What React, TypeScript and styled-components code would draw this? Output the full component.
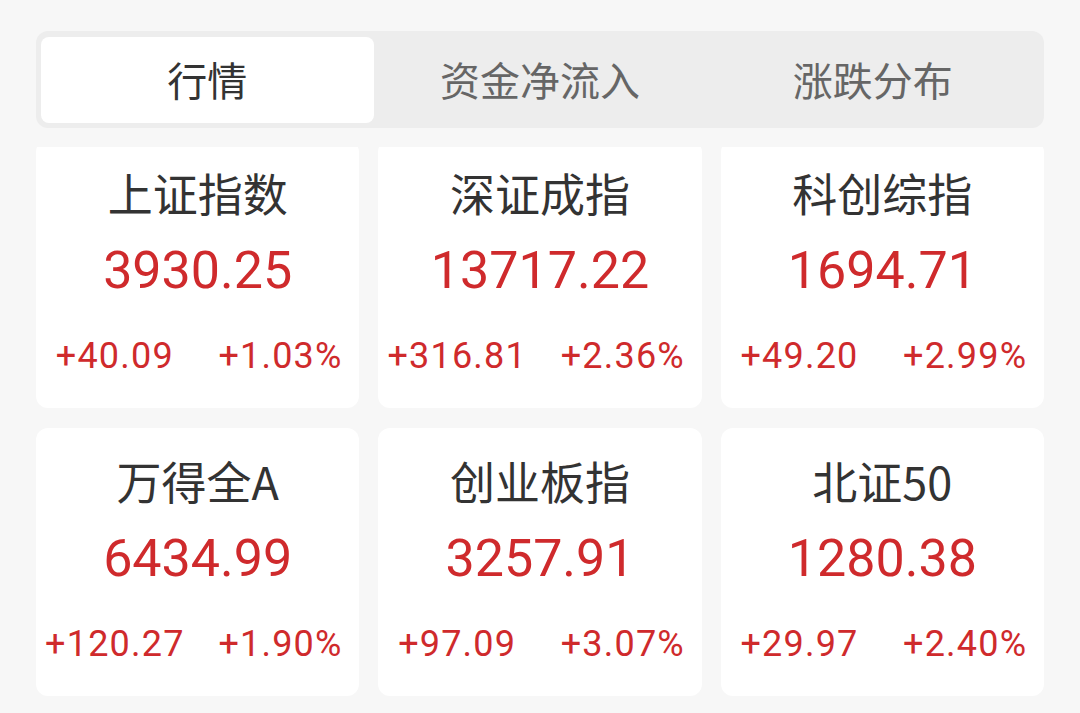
import { useState } from "react";
import styled, { createGlobalStyle } from "styled-components";

const GlobalStyle = createGlobalStyle`
  html, body {
    margin: 0;
    padding: 0;
    background: #f7f7f7;
  }
  body {
    font-family: Roboto, "Noto Sans CJK SC", "Noto Sans", sans-serif;
  }
`;

const Page = styled.div`
  box-sizing: border-box;
  display: flex;
  flex-direction: column;
  gap: 19px;
  height: 713px;
  overflow: hidden;
  padding: 31px 36px 0;
`;

const TabBar = styled.div`
  background: #ededed;
  border-radius: 12px;
  box-sizing: border-box;
  display: flex;
  flex-shrink: 0;
  height: 97px;
  padding: 6px 5px 5px;
`;

const Tab = styled.button<{ $active: boolean }>`
  align-items: center;
  background: ${({ $active }) => ($active ? "#ffffff" : "transparent")};
  border: none;
  border-radius: 8px;
  color: ${({ $active }) => ($active ? "#333333" : "#666666")};
  cursor: pointer;
  display: flex;
  flex: 1;
  font-family: "Noto Sans CJK SC", sans-serif;
  font-size: 40px;
  justify-content: center;
  padding: 0 0 2px;
`;

/* the card list is scrolled a few pixels, so the first row is cut at the top */
const Viewport = styled.div`
  flex: 1;
  overflow: hidden;
`;

const Grid = styled.div`
  display: grid;
  gap: 20px 19px;
  grid-template-columns: repeat(3, 1fr);
  margin-top: -7px;
`;

const Card = styled.div`
  background: #ffffff;
  border-radius: 12px;
  box-sizing: border-box;
  display: flex;
  flex-direction: column;
  height: 268px;
  padding: 25px 0 30px;
`;

const Name = styled.div`
  color: #333333;
  font-family: "Noto Sans CJK SC", sans-serif;
  font-size: 45px;
  line-height: 56px;
  text-align: center;
`;

const Price = styled.div`
  color: #cf2a2c;
  font-family: Roboto, sans-serif;
  font-size: 52px;
  line-height: 64px;
  margin-top: 18px;
  text-align: center;
`;

const Changes = styled.div`
  display: flex;
  gap: 8px;
  margin-top: 31px;
`;

const Change = styled.span`
  color: #cf2a2c;
  flex: 1;
  font-family: Roboto, sans-serif;
  font-size: 36px;
  letter-spacing: 1.2px;
  line-height: 44px;
  text-align: center;
  white-space: nowrap;
`;

interface Index {
  name: string;
  price: string;
  change: string;
  percent: string;
}

const tabs = ["行情", "资金净流入", "涨跌分布"];

const indices: Index[] = [
  { name: "上证指数", price: "3930.25", change: "+40.09", percent: "+1.03%" },
  { name: "深证成指", price: "13717.22", change: "+316.81", percent: "+2.36%" },
  { name: "科创综指", price: "1694.71", change: "+49.20", percent: "+2.99%" },
  { name: "万得全A", price: "6434.99", change: "+120.27", percent: "+1.90%" },
  { name: "创业板指", price: "3257.91", change: "+97.09", percent: "+3.07%" },
  { name: "北证50", price: "1280.38", change: "+29.97", percent: "+2.40%" },
];

const App = () => {
  const [activeTab, setActiveTab] = useState(0);

  return (
    <>
      <GlobalStyle />
      <Page>
        <TabBar>
          {tabs.map((tab, index) => (
            <Tab
              key={tab}
              $active={index === activeTab}
              onClick={() => setActiveTab(index)}
            >
              {tab}
            </Tab>
          ))}
        </TabBar>
        <Viewport>
          <Grid>
            {indices.map((item) => (
              <Card key={item.name}>
                <Name>{item.name}</Name>
                <Price>{item.price}</Price>
                <Changes>
                  <Change>{item.change}</Change>
                  <Change>{item.percent}</Change>
                </Changes>
              </Card>
            ))}
          </Grid>
        </Viewport>
      </Page>
    </>
  );
};

export default App;
